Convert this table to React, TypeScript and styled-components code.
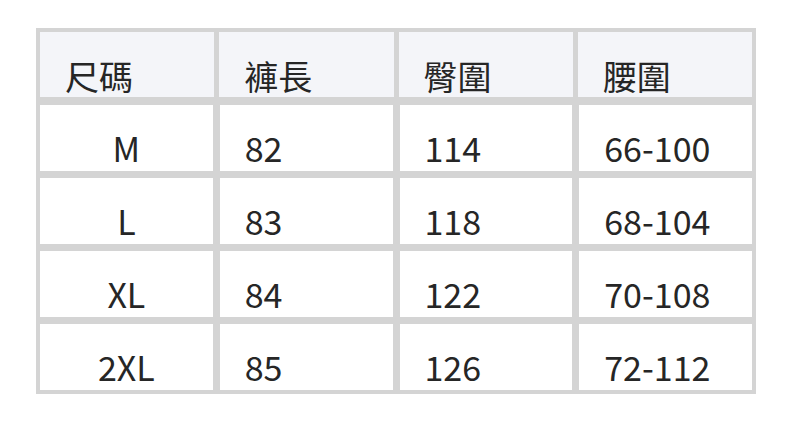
import React from 'react';
import styled, { createGlobalStyle } from 'styled-components';

const GlobalStyle = createGlobalStyle`
  html, body {
    margin: 0;
    padding: 0;
    background: #ffffff;
  }
  body {
    font-family: 'Noto Sans CJK TC', 'Noto Sans', sans-serif;
    color: #262626;
  }
`;

const HEADERS = ['尺碼', '褲長', '臀圍', '腰圍'];

const ROWS = [
  ['M', '82', '114', '66-100'],
  ['L', '83', '118', '68-104'],
  ['XL', '84', '122', '70-108'],
  ['2XL', '85', '126', '72-112'],
];

const Page = styled.div`
  width: 792px;
  height: 422px;
  padding: 28px 0 0 36px;
  box-sizing: border-box;
`;

const SizeTable = styled.div`
  width: 720px;
  box-sizing: border-box;
  padding: 4px;
  background: #d4d4d4;
  display: flex;
  flex-direction: column;
  gap: 7px;
`;

const HeaderRow = styled.div`
  display: grid;
  grid-template-columns: repeat(4, 1fr);
  column-gap: 5px;
  height: 65px;
  margin-bottom: 1px;
`;

const Row = styled.div`
  display: grid;
  grid-template-columns: repeat(4, 1fr);
  column-gap: 7px;
  height: 66px;
`;

const Cell = styled.div<{ $head?: boolean; $center?: boolean }>`
  background: ${(p) => (p.$head ? '#f4f5f9' : '#ffffff')};
  display: flex;
  align-items: flex-end;
  justify-content: ${(p) => (p.$center ? 'center' : 'flex-start')};
  padding: 0 0 ${(p) => (p.$head ? '4px' : '6px')} ${(p) => (p.$center ? '0' : '25px')};
  font-size: 34px;
  line-height: 1;
  white-space: nowrap;
`;

export default function App() {
  return (
    <>
      <GlobalStyle />
      <Page>
        <SizeTable>
          <HeaderRow>
            {HEADERS.map((h) => (
              <Cell key={h} $head>
                {h}
              </Cell>
            ))}
          </HeaderRow>
          {ROWS.map((r) => (
            <Row key={r[0]}>
              {r.map((v, i) => (
                <Cell key={i} $center={i === 0}>
                  {v}
                </Cell>
              ))}
            </Row>
          ))}
        </SizeTable>
      </Page>
    </>
  );
}
